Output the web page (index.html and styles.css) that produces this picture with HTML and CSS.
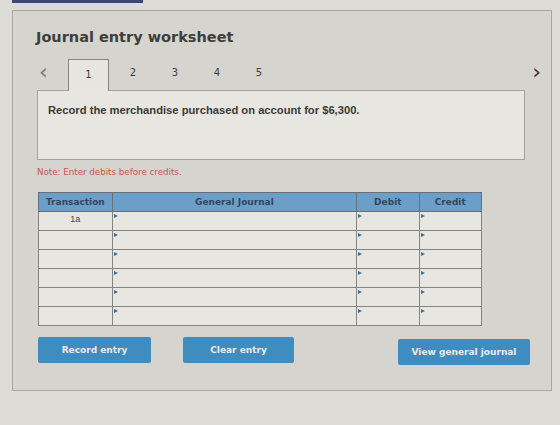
FILE: index.html
```html
<!DOCTYPE html>
<html>
<head>
    <meta charset="UTF-8">
    <meta name="viewport" content="width=device-width, initial-scale=1.0">
    <title>Journal entry worksheet</title>
    <link rel="stylesheet" href="styles.css">
</head>
<body>
    <div class="top-tab"></div>
    <div class="worksheet">
        <h1>Journal entry worksheet</h1>

        <!-- step tabs -->
        <div class="steps">
            <span class="arrow">&lsaquo;</span>
            <span class="step active">1</span>
            <span class="step">2</span>
            <span class="step">3</span>
            <span class="step">4</span>
            <span class="step">5</span>
            <span class="arrow next">&rsaquo;</span>
        </div>
        <div class="question">
            <p>Record the merchandise purchased on account for $6,300.</p>
        </div>

        <p class="note">Note: Enter debits before credits.</p>

        <table class="journal">
            <thead>
                <tr>
                    <th class="col-trans">Transaction</th>
                    <th class="col-gj">General Journal</th>
                    <th class="col-num">Debit</th>
                    <th class="col-num">Credit</th>
                </tr>
            </thead>
            <tbody id="rows">
                <!-- rows are filled in below -->
            </tbody>
        </table>

        <div class="actions">
            <button class="btn">Record entry</button>
            <button class="btn clear">Clear entry</button>
            <button class="btn view">View general journal</button>
        </div>
    </div>

    <script>
        // six empty entry lines, only the first one gets the transaction label
        var rows = document.getElementById('rows');
        for (var i = 0; i < 6; i++) {
            rows.innerHTML += '<tr>' +
                '<td class="trans">' + (i === 0 ? '1a' : '') + '</td>' +
                '<td><span class="mark"></span></td>' +
                '<td><span class="mark"></span></td>' +
                '<td><span class="mark"></span></td>' +
                '</tr>';
        }
    </script>
</body>
</html>
```

FILE: styles.css
```css
body {
    margin: 0;
    padding: 0;
    background-color: #dcdbd6;
    font-family: "DejaVu Sans", Verdana, sans-serif;
    color: #3c3c3a;
    height: 425px;
    overflow: hidden;
}
.top-tab {
    width: 131px;
    height: 3px;
    margin-left: 12px;
    background-color: #3b4872;
}
.worksheet {
    margin: 7px 8px 0 12px;
    padding: 16px 22px 25px 23px;
    border: 1px solid #a8a7a2;
    background-color: #d5d4cf;
}
h1 {
    margin: 0;
    font-size: 14.5px;
    line-height: 20px;
    font-weight: bold;
    color: #3e3e3c;
}
/* Step tabs */
.steps {
    display: flex;
    align-items: stretch;
    height: 32px;
    margin-top: 11px;
    margin-left: 1px;
    width: 504px;
}
.arrow {
    width: 29px;
    font-size: 22px;
    line-height: 28px;
    color: #77777a;
    padding-left: 2px;
}
.arrow.next {
    margin-left: auto;
    width: auto;
    color: #3a3a3c;
}
.step {
    width: 42px;
    text-align: center;
    font-size: 10px;
    line-height: 30px;
    color: #3c3c3c;
}
.step.active {
    width: 39px;
    margin-right: 3px;
    background-color: #e6e5e0;
    border: 1px solid #86857f;
    border-bottom: none;
    position: relative;
    top: 1px;
}
.question {
    width: 486px;
    height: 68px;
    margin-left: 1px;
    background-color: #e7e6e1;
    border: 1px solid #a3a29d;
}
.question p {
    margin: 13px 0 0 10px;
    font-family: "Liberation Sans", Arial, sans-serif;
    font-size: 11.2px;
    font-weight: bold;
    color: #3a3a38;
}
.note {
    margin: 6px 0 0 1px;
    font-size: 8.7px;
    line-height: 12px;
    color: #c2574f;
}
/* Journal table */
.journal {
    margin-top: 14px;
    margin-left: 2px;
    border-collapse: collapse;
    width: 444px;
    font-size: 9px;
}
.journal th {
    height: 18px;
    padding: 0;
    background-color: #6b9fc9;
    color: #34465c;
    font-weight: bold;
    border: 1px solid #66707a;
}
.col-trans { width: 73px; }
.col-gj { width: 247px; }
.col-num { width: 62px; }
.journal td {
    height: 18px;
    padding: 0;
    background-color: #e7e6e1;
    border: 1px solid #85847f;
    vertical-align: top;
    position: relative;
}
.journal td.trans {
    text-align: center;
    line-height: 14px;
    font-family: "Liberation Sans", Arial, sans-serif;
    font-size: 9px;
    color: #444;
}
.mark {
    position: absolute;
    left: 1px;
    top: 2px;
    width: 0;
    height: 0;
    border-top: 2.5px solid transparent;
    border-bottom: 2.5px solid transparent;
    border-left: 4px solid #3f6e9c;
}
/* Buttons */
.actions {
    display: flex;
    margin-top: 11px;
    margin-left: 2px;
    width: 492px;
}
.btn {
    height: 26px;
    width: 113px;
    border: none;
    border-radius: 2px;
    background-color: #3f8cc0;
    color: #e6edf2;
    font-family: "DejaVu Sans", Verdana, sans-serif;
    font-size: 9px;
    font-weight: bold;
    cursor: pointer;
}
.btn.clear {
    width: 111px;
    margin-left: 32px;
}
.btn.view {
    width: 132px;
    margin-left: auto;
    margin-top: 2px;
}
```
